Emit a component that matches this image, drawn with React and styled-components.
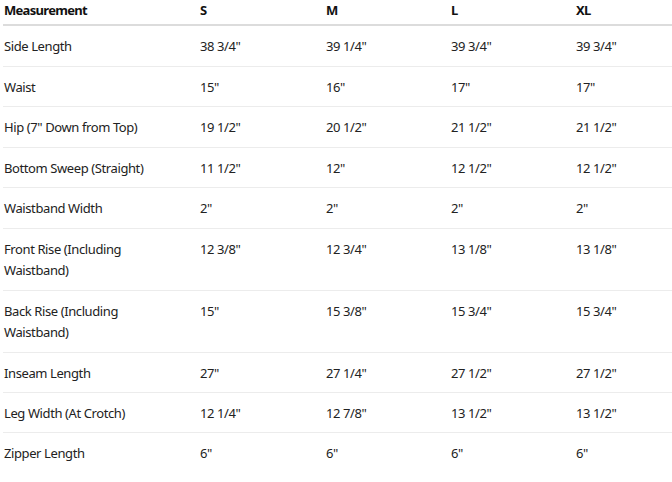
import React from "react";
import styled, { createGlobalStyle } from "styled-components";

const Global = createGlobalStyle`
  html, body { margin: 0; padding: 0; background: #fff; }
  body { font-family: "Noto Sans", "Open Sans", sans-serif; color: #111; }
`;

const Wrap = styled.div`
  padding-left: 3px;
  width: 669px;
`;

const Table = styled.table`
  width: 100%;
  border-collapse: collapse;
  table-layout: fixed;
  font-size: 13px;
  line-height: 21.45px;
  letter-spacing: -0.4px;
`;

const Col = styled.col`
  width: ${(p) => p.$w}px;
`;

const Th = styled.th`
  text-align: left;
  font-weight: 700;
  letter-spacing: -0.7px;
  padding: 0 18px 3px 1px;
  border-bottom: 2px solid #dcdcdc;
  color: #111;
  vertical-align: top;
`;

const Td = styled.td`
  padding: 10px 18px 8px 1px;
  vertical-align: top;
  color: #222;
`;

const Tr = styled.tr`
  border-bottom: 1px solid ${(p) => (p.$last ? "transparent" : "#ececec")};
`;

const rows = [
  ["Side Length", '38 3/4"', '39 1/4"', '39 3/4"', '39 3/4"'],
  ["Waist", '15"', '16"', '17"', '17"'],
  ["Hip (7\" Down from Top)", '19 1/2"', '20 1/2"', '21 1/2"', '21 1/2"'],
  ["Bottom Sweep (Straight)", '11 1/2"', '12"', '12 1/2"', '12 1/2"'],
  ["Waistband Width", '2"', '2"', '2"', '2"'],
  ["Front Rise (Including Waistband)", '12 3/8"', '12 3/4"', '13 1/8"', '13 1/8"'],
  ["Back Rise (Including Waistband)", '15"', '15 3/8"', '15 3/4"', '15 3/4"'],
  ["Inseam Length", '27"', '27 1/4"', '27 1/2"', '27 1/2"'],
  ["Leg Width (At Crotch)", '12 1/4"', '12 7/8"', '13 1/2"', '13 1/2"'],
  ["Zipper Length", '6"', '6"', '6"', '6"'],
];

export default function App() {
  return (
    <>
      <Global />
      <Wrap>
        <Table>
          <colgroup>
            <Col $w={196} />
            <Col $w={126} />
            <Col $w={125} />
            <Col $w={125} />
            <Col $w={97} />
          </colgroup>
          <thead>
            <tr>
              <Th>Measurement</Th>
              <Th>S</Th>
              <Th>M</Th>
              <Th>L</Th>
              <Th>XL</Th>
            </tr>
          </thead>
          <tbody>
            {rows.map((r, i) => (
              <Tr key={i} $last={i === rows.length - 1}>
                {r.map((c, j) => (
                  <Td key={j}>{c}</Td>
                ))}
              </Tr>
            ))}
          </tbody>
        </Table>
      </Wrap>
    </>
  );
}
